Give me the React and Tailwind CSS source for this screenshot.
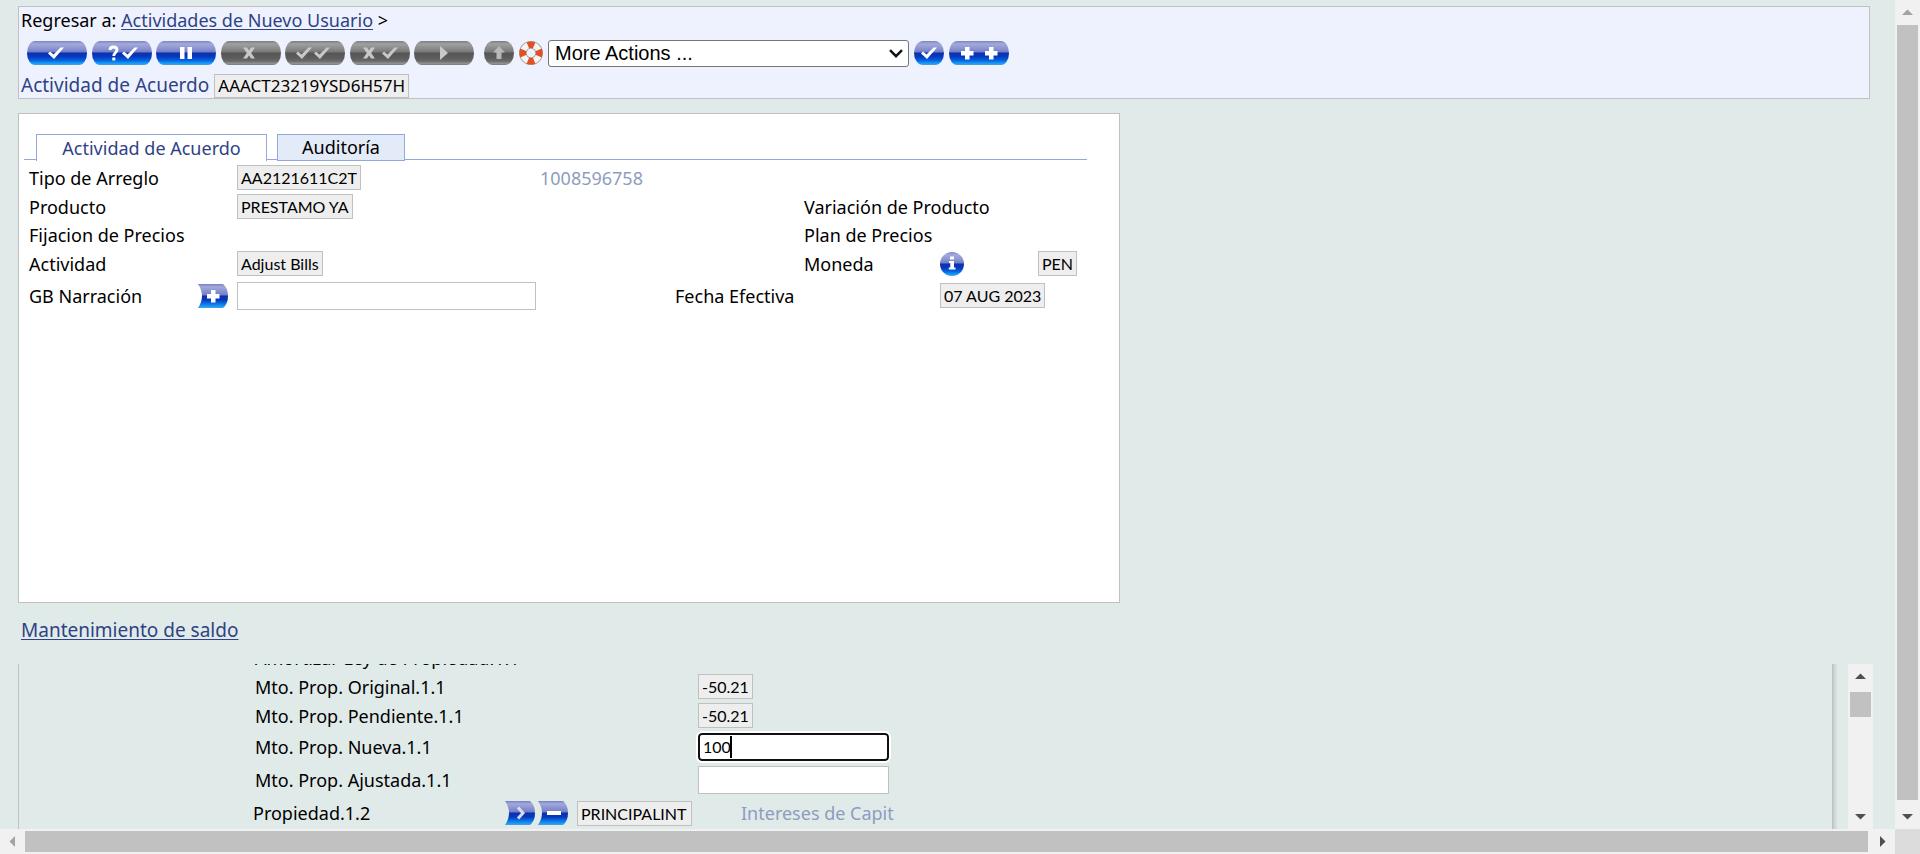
import React from "react";

const BLUE =
  "bg-[linear-gradient(to_bottom,#7c84c2_0%,#a3a9da_12%,#8e96d2_30%,#7480c8_44%,#0f30ac_51%,#0638bd_64%,#0560dc_80%,#1298f8_92%,#4f9fdc_100%)]";
const GRAY =
  "bg-[linear-gradient(to_bottom,#7c7c7c_0%,#a0a0a0_12%,#8c8c8c_30%,#7a7a7a_44%,#565656_51%,#5c5c5c_70%,#6a6a6a_84%,#929292_93%,#7a7a7a_100%)]";

const CHECK = "M0 6.5 L2 4.5 L5.5 7.5 L12.5 0.5 L16 0.5 L6 12 Z";
const CROSS = "M0 0 H4 L6 3 L8 0 H12 L8.2 5.5 L12 11 H8 L6 8 L4 11 H0 L3.8 5.5 Z";
const PLUS = "M4 0 H8.5 V4 H12.5 V8.5 H8.5 V12.5 H4 V8.5 H0 V4 H4 Z";

function Glyph({ name }) {
  switch (name) {
    case "check":
      return <path d={CHECK} transform="translate(21 6)" />;
    case "query":
      return (
        <>
          <path d="M18 9 C18 5 25 5 25 9 C25 11.5 21.8 11.5 21.8 15" fill="none" stroke="currentColor" strokeWidth="2.8" />
          <rect x="20.3" y="16.5" width="3" height="3" />
          <path d={CHECK} transform="translate(30 6)" />
        </>
      );
    case "pause":
      return (
        <>
          <rect x="24" y="6" width="4.5" height="12" />
          <rect x="31.5" y="6" width="4.5" height="12" />
        </>
      );
    case "cross":
      return <path d={CROSS} transform="translate(22 6.5)" />;
    case "double":
      return (
        <>
          <path d={CHECK} transform="translate(11 6)" />
          <path d={CHECK} transform="translate(29 6)" />
        </>
      );
    case "crosscheck":
      return (
        <>
          <path d={CROSS} transform="translate(13 6.5)" />
          <path d={CHECK} transform="translate(32 6)" />
        </>
      );
    case "play":
      return <path d="M26 5 L34 12 L26 19 Z" />;
    case "plusplus":
      return (
        <>
          <path d={PLUS} transform="translate(12 6)" />
          <path d={PLUS} transform="translate(36 6)" />
        </>
      );
    default:
      return null;
  }
}

function PillButton({ icon, label, disabled }) {
  return (
    <button
      type="button"
      aria-label={label}
      disabled={disabled}
      className={`h-6 w-[60px] shrink-0 rounded-[8px/12px] ${disabled ? GRAY + " text-[#c8c8c8]" : BLUE + " text-white"}`}
    >
      <svg viewBox="0 0 60 24" className="block h-6 w-full" fill="currentColor">
        <Glyph name={icon} />
      </svg>
    </button>
  );
}

function RoundButton({ label, gray, children }) {
  return (
    <button
      type="button"
      aria-label={label}
      disabled={gray}
      className={`h-6 w-[30px] shrink-0 rounded-[9px/12px] ${gray ? GRAY + " text-[#b8b8b8]" : BLUE + " text-white"}`}
    >
      <svg viewBox="0 0 30 24" className="block h-6 w-full" fill="currentColor">
        {children}
      </svg>
    </button>
  );
}

function FlagButton({ id, label, children }) {
  return (
    <button type="button" aria-label={label} className="h-6 w-[30px] shrink-0">
      <svg viewBox="0 0 30 24" className="block h-6 w-full">
        <defs>
          <linearGradient id={id} x1="0" y1="0" x2="0" y2="1">
            <stop offset="0" stopColor="#7880c2" />
            <stop offset="0.12" stopColor="#a3a9da" />
            <stop offset="0.44" stopColor="#7480c8" />
            <stop offset="0.51" stopColor="#0f30ac" />
            <stop offset="0.66" stopColor="#0638bd" />
            <stop offset="0.92" stopColor="#1298f8" />
            <stop offset="1" stopColor="#4f9fdc" />
          </linearGradient>
        </defs>
        <path d="M0 0 H25 Q30 4 30 12 Q30 20 25 24 H0 Q4 18 4 12 Q4 6 0 0 Z" fill={`url(#${id})`} />
        {children}
      </svg>
    </button>
  );
}

function Lifebuoy() {
  return (
    <button type="button" aria-label="Ayuda" className="h-6 w-6 shrink-0">
      <svg viewBox="0 0 24 24" className="block h-6 w-6">
        <circle cx="12" cy="12" r="8.2" fill="none" stroke="#a9a5a6" strokeWidth="7.6" />
        <circle cx="12" cy="12" r="8.2" fill="none" stroke="#f7f5f4" strokeWidth="5.8" />
        <circle
          cx="12"
          cy="12"
          r="8.2"
          fill="none"
          stroke="#df5225"
          strokeWidth="6.8"
          pathLength="80"
          strokeDasharray="10 10"
          strokeDashoffset="5"
        />
      </svg>
    </button>
  );
}

function Value({ children, className = "" }) {
  return (
    <output
      className={`inline-block border border-[#c0c0c0] bg-[#eeeeee] px-[3px] font-['Lato','Carlito',sans-serif] text-base leading-[23px] whitespace-nowrap ${className}`}
    >
      {children}
    </output>
  );
}

function Arrow({ direction, muted }) {
  const paths = {
    up: "M7 15 L12.5 9.5 L18 15 Z",
    down: "M7 10 L12.5 15.5 L18 10 Z",
    left: "M15 7 L9.5 12.5 L15 18 Z",
    right: "M10 7 L15.5 12.5 L10 18 Z",
  };
  return (
    <svg viewBox="0 0 25 25" className="block h-[25px] w-[25px] shrink-0" fill={muted ? "#a3a3a3" : "#505050"}>
      <path d={paths[direction]} />
    </svg>
  );
}

function Header() {
  return (
    <header className="mt-[6px] mr-[25px] border border-[#c0c0c0] bg-[#eef2ff] pl-[2px]">
      <nav className="leading-[26px]">
        Regresar a:{" "}
        <a href="#actividades" className="text-[#2f4284] underline underline-offset-2">
          Actividades de Nuevo Usuario
        </a>{" "}
        &gt;
      </nav>
      <div className="flex h-10 items-center pl-[6px]">
        <div className="flex w-[447px] shrink-0 justify-between">
          <PillButton icon="check" label="Validar" />
          <PillButton icon="query" label="Validar registro" />
          <PillButton icon="pause" label="Retener" />
          <PillButton icon="cross" label="Eliminar" disabled />
          <PillButton icon="double" label="Autorizar" disabled />
          <PillButton icon="crosscheck" label="Revertir" disabled />
          <PillButton icon="play" label="Continuar" disabled />
        </div>
        <div className="ml-[10px] flex items-center gap-[5px]">
          <RoundButton label="Subir" gray>
            <path d="M15 5 L21 11.5 H17.5 V18 H12.5 V11.5 H9 Z" />
          </RoundButton>
          <Lifebuoy />
          <div className="relative w-[361px]">
            <select
              aria-label="More Actions"
              className="block h-[27px] w-full appearance-none rounded-[3px] border border-[#767676] bg-white pl-[6px] font-['Liberation_Sans',Arial,sans-serif] text-[20px] leading-[24px]"
            >
              <option>More Actions ...</option>
            </select>
            <svg viewBox="0 0 14 9" className="pointer-events-none absolute top-[9px] right-[6px] h-[9px] w-[14px]">
              <path d="M1 1.2 L7 7.2 L13 1.2" fill="none" stroke="#111" strokeWidth="2.4" />
            </svg>
          </div>
          <RoundButton label="Ejecutar">
            <path d={CHECK} transform="translate(7 6)" />
          </RoundButton>
          <PillButton icon="plusplus" label="Agregar" />
        </div>
      </div>
      <div className="flex items-center gap-[5px] leading-[25px]">
        <span className="text-[19px] text-[#2f4284]">Actividad de Acuerdo</span>
        <output className="border border-[#c0c0c0] bg-[#eeeeee] px-[3px] text-[17px] leading-[22px]">
          AAACT23219YSD6H57H
        </output>
      </div>
    </header>
  );
}

function AgreementPanel() {
  return (
    <section className="mt-[14px] h-[490px] w-[1102px] border border-[#c0c0c0] bg-white pt-5 pl-[5px]">
      <div className="flex h-[26px] w-[1063px] items-start gap-[10px] border-b border-[#8faadb] pl-3">
        <button
          type="button"
          className="h-[27px] w-[231px] shrink-0 border border-b-0 border-[#8faadb] bg-white leading-[25px] text-[#2f4284]"
        >
          Actividad de Acuerdo
        </button>
        <button type="button" className="h-[27px] w-[128px] shrink-0 border border-[#8faadb] bg-[#e3eaf8] leading-[25px]">
          Auditoría
        </button>
      </div>
      <div className="grid grid-cols-[208px_303px_135px_129px_136px_98px_1fr] grid-rows-[29px_29px_28px_29px_35px] items-center pt-[3px] pl-[5px] leading-6">
        <span>Tipo de Arreglo</span>
        <Value className="justify-self-start">AA2121611C2T</Value>
        <span className="col-span-5 text-[#8f9cc0]">1008596758</span>

        <span>Producto</span>
        <Value className="justify-self-start">PRESTAMO YA</Value>
        <span className="col-span-3 col-start-5">Variación de Producto</span>

        <span>Fijacion de Precios</span>
        <span className="col-span-3 col-start-5">Plan de Precios</span>

        <span>Actividad</span>
        <Value className="justify-self-start">Adjust Bills</Value>
        <span className="col-start-5">Moneda</span>
        <button type="button" aria-label="Información" className="h-6 w-6">
          <span className={`block h-6 w-6 rounded-full ${BLUE}`}>
            <svg viewBox="0 0 24 24" className="block h-6 w-6" fill="white">
              <rect x="10" y="4.5" width="4" height="3" />
              <path d="M9 9 H14 V15.5 H15.5 V17.5 H8.8 V15.5 H10.3 V11 H9 Z" />
            </svg>
          </span>
        </button>
        <Value className="justify-self-start">PEN</Value>

        <div className="flex items-center justify-between pr-[9px]">
          <label htmlFor="narracion" className="whitespace-nowrap">
            GB Narración
          </label>
          <FlagButton id="flag-plus" label="Agregar narración">
            <path d={PLUS} transform="translate(9 6)" fill="#fff" />
          </FlagButton>
        </div>
        <input id="narracion" type="text" className="h-7 w-[299px] border border-[#c0c0c0] bg-white px-[3px]" />
        <span className="col-span-2 col-start-4">Fecha Efectiva</span>
        <Value className="col-span-2 justify-self-start">07 AUG 2023</Value>
      </div>
    </section>
  );
}

function BalanceList() {
  return (
    <section className="flex min-h-0 flex-1 pr-[22px]">
      <div className="min-w-0 flex-1 overflow-hidden border-r border-l border-[#c0c0c0] leading-6">
        <div className="-mt-[21px] grid grid-cols-[443px_1fr] grid-rows-[29px_29px_29px_33px_34px] items-center pl-[236px]">
          <span className="col-span-2">Amortizar Ley de Propiedad.1.1</span>
          <span>Mto. Prop. Original.1.1</span>
          <Value className="justify-self-start">-50.21</Value>
          <span>Mto. Prop. Pendiente.1.1</span>
          <Value className="justify-self-start">-50.21</Value>
          <label htmlFor="nueva">Mto. Prop. Nueva.1.1</label>
          <div className="relative w-[191px]">
            <input
              id="nueva"
              type="text"
              defaultValue="100"
              className="block h-7 w-full rounded-[4px] border-2 border-[#101010] bg-white px-[3px] font-['Lato','Carlito',sans-serif] text-base outline-2 outline-white"
            />
            <span className="absolute top-[3px] left-[32px] h-[22px] w-[2px] bg-black" />
          </div>
          <label htmlFor="ajustada">Mto. Prop. Ajustada.1.1</label>
          <input
            id="ajustada"
            type="text"
            className="h-7 w-[191px] border border-[#c0c0c0] bg-white px-[3px] font-['Lato','Carlito',sans-serif] text-base"
          />
        </div>
        <div className="flex h-8 items-center pl-[234px]">
          <span className="w-[252px]">Propiedad.1.2</span>
          <div className="flex gap-[3px]">
            <FlagButton id="flag-expand" label="Expandir">
              <path d="M13 6.5 L18 12 L13 17.5" fill="none" stroke="#d9dcf2" strokeWidth="3" />
            </FlagButton>
            <FlagButton id="flag-minus" label="Quitar">
              <rect x="9" y="10" width="14" height="4" fill="#fff" />
            </FlagButton>
          </div>
          <Value className="ml-[9px] w-[115px]">PRINCIPALINT</Value>
          <span className="ml-[49px] text-[#8f9cc0]">Intereses de Capit</span>
        </div>
      </div>
      <div className="w-[15px] shrink-0 bg-[linear-gradient(to_right,#c4cccb,#e0ebe9_5px)]" />
      <div className="flex w-[25px] shrink-0 flex-col bg-[#f1f1f1]">
        <Arrow direction="up" />
        <div className="mx-[2px] mt-[3px] h-[25px] bg-[#c1c1c1]" />
        <div className="flex-1" />
        <Arrow direction="down" />
      </div>
    </section>
  );
}

export default function App() {
  return (
    <div className="flex h-screen flex-col overflow-hidden bg-[#e0ebe9] font-['Noto_Sans','Open_Sans',sans-serif] text-[18px] text-black">
      <div className="flex min-h-0 flex-1">
        <main className="flex min-w-0 flex-1 flex-col overflow-hidden pl-[18px]">
          <Header />
          <AgreementPanel />
          <div className="flex h-[61px] shrink-0 items-start pt-[13px] pl-[3px]">
            <a href="#saldo" className="text-[19px] leading-7 text-[#2f4284] underline underline-offset-2">
              Mantenimiento de saldo
            </a>
          </div>
          <BalanceList />
        </main>
        <div className="flex w-[25px] shrink-0 flex-col bg-[#f1f1f1]">
          <Arrow direction="up" muted />
          <div className="mx-[2px] flex-1 bg-[#c1c1c1]" />
          <div className="h-1 shrink-0" />
          <Arrow direction="down" />
        </div>
      </div>
      <div className="flex h-[25px] shrink-0 bg-[#f1f1f1]">
        <Arrow direction="left" muted />
        <div className="my-[2px] flex-1 bg-[#c1c1c1]" />
        <div className="w-[2px] shrink-0" />
        <Arrow direction="right" />
        <div className="w-[25px] shrink-0 bg-[#dcdcdc]" />
      </div>
    </div>
  );
}
